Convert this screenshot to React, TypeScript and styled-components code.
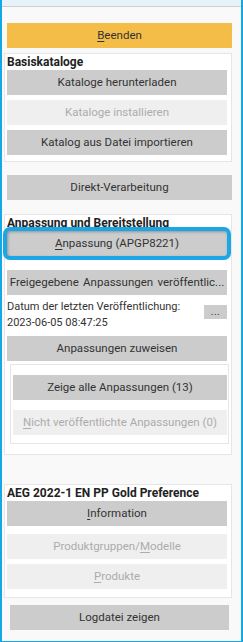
import { FC, ReactNode } from 'react';
import styled, { createGlobalStyle } from 'styled-components';

const GlobalStyle = createGlobalStyle`
  html, body {
    margin: 0;
    padding: 0;
    background: #ffffff;
  }
  body {
    font-family: Roboto, "Liberation Sans", sans-serif;
    font-size: 12px;
    color: #333333;
  }
`;

const Frame = styled.div`
  width: 243px;
  height: 642px;
  box-sizing: border-box;
  background: #f9f9f9;
  border-left: 2px solid #14a8e6;
  border-right: 2px solid #14a8e6;
  border-bottom: 1px solid #14a8e6;
  display: flex;
  flex-direction: column;
  overflow: hidden;
`;

const TopStrip = styled.div`
  height: 6px;
  flex: none;
  background: #e6f2f8;
  border-bottom: 1px solid #cfcfcf;
`;

const Content = styled.div`
  display: flex;
  flex-direction: column;
  align-items: flex-start;
  padding-left: 2px;
`;

const Button = styled.button<{
  $variant?: 'default' | 'primary' | 'disabled';
  $focused?: boolean;
  $spread?: boolean;
}>`
  display: block;
  box-sizing: border-box;
  width: 100%;
  height: 25px;
  margin: 0;
  padding: 0 2px;
  border: none;
  border-radius: ${(p) => (p.$focused ? '3px' : '0')};
  font-family: Roboto, "Liberation Sans", sans-serif;
  font-size: 11.5px;
  line-height: 25px;
  text-align: center;
  white-space: nowrap;
  overflow: hidden;
  word-spacing: ${(p) => (p.$spread ? '1.5px' : 'normal')};
  background: ${(p) =>
    p.$variant === 'primary' ? '#f3bd48' : p.$variant === 'disabled' ? '#efefef' : '#cccccc'};
  color: ${(p) => (p.$variant === 'disabled' ? '#acacac' : '#333333')};
  box-shadow: ${(p) =>
    p.$focused ? 'inset 1px 1px 3px rgba(0, 0, 0, 0.28), 0 0 0 4px #1ba7e6' : 'none'};

  u {
    text-decoration: underline;
    text-underline-offset: 2px;
  }
`;

const TopButton = styled(Button)<{ $top: number; $left: number; $w: number }>`
  margin-top: ${(p) => p.$top}px;
  margin-left: ${(p) => p.$left}px;
  width: ${(p) => p.$w}px;
`;

const Panel = styled.section<{ $top: number; $bottom: number }>`
  box-sizing: border-box;
  width: 228px;
  margin-top: ${(p) => p.$top}px;
  padding: 0 4px ${(p) => p.$bottom}px 2px;
  background: #ffffff;
  border: 1px solid #e6e6e6;
  display: flex;
  flex-direction: column;
`;

const PanelTitle = styled.h3`
  margin: 0;
  height: 16px;
  font-family: Roboto, "Liberation Sans", sans-serif;
  font-size: 12px;
  font-weight: 700;
  line-height: 16px;
  color: #222222;
  white-space: nowrap;
`;

const Stack = styled.div<{ $gap: number }>`
  display: flex;
  flex-direction: column;
  gap: ${(p) => p.$gap}px;
`;

const InfoRow = styled.div`
  display: flex;
  align-items: flex-start;
  margin: 4px 0 5px;
`;

const InfoText = styled.div`
  flex: 1;
  line-height: 16px;
  font-size: 11px;
  color: #333333;
  white-space: nowrap;
`;

const MoreButton = styled.button`
  flex: none;
  width: 23px;
  height: 14px;
  margin-top: 6px;
  padding: 0;
  border: none;
  background: #cccccc;
  color: #333333;
  font-family: Roboto, "Liberation Sans", sans-serif;
  font-size: 10px;
  line-height: 10px;
  letter-spacing: 0.5px;
`;

const SubPanel = styled.div`
  box-sizing: border-box;
  width: 219px;
  margin: 3px 0 0 3px;
  padding: 10px 1px 8px 2px;
  border: 1px solid #e6e6e6;
  display: flex;
  flex-direction: column;
  gap: 10px;
`;

const U: FC<{ children: ReactNode }> = ({ children }) => <u>{children}</u>;

const App: FC = () => {
  return (
    <>
      <GlobalStyle />
      <Frame>
        <TopStrip />
        <Content>
          <TopButton $variant="primary" $top={16} $left={3} $w={225}>
            <U>B</U>eenden
          </TopButton>

          <Panel $top={5} $bottom={6}>
            <PanelTitle>Basiskataloge</PanelTitle>
            <Stack $gap={5}>
              <Button>Kataloge herunterladen</Button>
              <Button $variant="disabled">Kataloge installieren</Button>
              <Button>Katalog aus Datei importieren</Button>
            </Stack>
          </Panel>

          <TopButton $top={13} $left={3} $w={225}>
            Direkt-Verarbeitung
          </TopButton>

          <Panel $top={14} $bottom={10}>
            <PanelTitle>Anpassung und Bereitstellung</PanelTitle>
            <Stack $gap={14}>
              <Button $focused>
                <U>A</U>npassung (APGP8221)
              </Button>
              <Button $spread>Freigegebene Anpassungen veröffentlic...</Button>
            </Stack>
            <InfoRow>
              <InfoText>
                Datum der letzten Veröffentlichung:
                <br />
                2023-06-05 08:47:25
              </InfoText>
              <MoreButton>...</MoreButton>
            </InfoRow>
            <Button>Anpassungen zuweisen</Button>
            <SubPanel>
              <Button>Zeige alle Anpassungen (13)</Button>
              <Button $variant="disabled">
                <U>N</U>icht veröffentlichte Anpassungen (0)
              </Button>
            </SubPanel>
          </Panel>

          <Panel $top={29} $bottom={8}>
            <PanelTitle>AEG 2022-1 EN PP Gold Preference</PanelTitle>
            <Stack $gap={8}>
              <Button>
                <U>I</U>nformation
              </Button>
              <Stack $gap={5}>
                <Button $variant="disabled">
                  Produktgruppen/<U>M</U>odelle
                </Button>
                <Button $variant="disabled">
                  <U>P</U>rodukte
                </Button>
              </Stack>
            </Stack>
          </Panel>

          <TopButton $top={7} $left={6} $w={219}>
            Logdatei zeigen
          </TopButton>
        </Content>
      </Frame>
    </>
  );
};

export default App;
